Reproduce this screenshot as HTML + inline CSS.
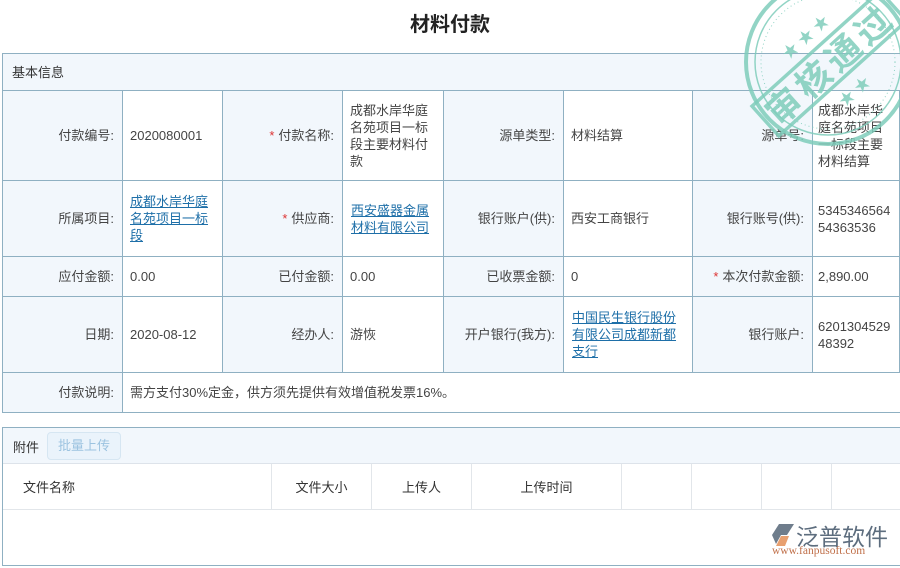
<!DOCTYPE html>
<html><head><meta charset="utf-8"><style>
*{margin:0;padding:0;box-sizing:border-box}
body{width:900px;height:568px;background:#fff;font-family:"Liberation Sans","Noto Sans CJK SC",sans-serif;font-size:13px;color:#444;position:relative;overflow:hidden}
.t{position:absolute;left:0;top:8px;width:900px;text-align:center;font-size:20px;font-weight:bold;color:#222}
.c{position:absolute;border-right:1px solid #8fb0c2;border-bottom:1px solid #8fb0c2;display:flex;align-items:center;line-height:17px}
.l{background:#f2f7fc;justify-content:flex-end;padding-right:8px;text-align:right}
.v{background:#fff;padding-left:7px;padding-right:4px}
.s{color:#d33;margin-right:4px}
a{color:#1e6fa8;text-decoration:underline}
.box{position:absolute;border:1px solid #8fb0c2}
.h{position:absolute;border-right:1px solid #e2e6ea;height:45px;top:464px;display:flex;align-items:center;justify-content:center;color:#333}
</style></head><body>
<div class="t">材料付款</div>
<div class="box" style="left:2px;top:53px;width:900px;height:360px;border-right:none"></div>
<div class="c" style="left:3px;top:54px;width:897px;height:37px;background:#f2f7fc;padding-left:9px;color:#333;border-right:none">基本信息</div>

<!-- row1 -->
<div class="c l" style="left:3px;top:91px;width:120px;height:90px">付款编号:</div>
<div class="c v" style="left:123px;top:91px;width:100px;height:90px">2020080001</div>
<div class="c l" style="left:223px;top:91px;width:120px;height:90px"><span class="s">*</span>付款名称:</div>
<div class="c v" style="left:343px;top:91px;width:101px;height:90px">成都水岸华庭名苑项目一标段主要材料付款</div>
<div class="c l" style="left:444px;top:91px;width:120px;height:90px">源单类型:</div>
<div class="c v" style="left:564px;top:91px;width:129px;height:90px">材料结算</div>
<div class="c l" style="left:693px;top:91px;width:120px;height:90px">源单号:</div>
<div class="c v" style="left:813px;top:91px;width:87px;height:90px;padding-left:5px">成都水岸华庭名苑项目一标段主要材料结算</div>
<!-- row2 -->
<div class="c l" style="left:3px;top:181px;width:120px;height:76px">所属项目:</div>
<div class="c v" style="left:123px;top:181px;width:100px;height:76px"><a>成都水岸华庭名苑项目一标段</a></div>
<div class="c l" style="left:223px;top:181px;width:120px;height:76px"><span class="s">*</span>供应商:</div>
<div class="c v" style="left:343px;top:181px;width:101px;height:76px;padding-left:8px"><a>西安盛器金属材料有限公司</a></div>
<div class="c l" style="left:444px;top:181px;width:120px;height:76px">银行账户(供):</div>
<div class="c v" style="left:564px;top:181px;width:129px;height:76px">西安工商银行</div>
<div class="c l" style="left:693px;top:181px;width:120px;height:76px">银行账号(供):</div>
<div class="c v" style="left:813px;top:181px;width:87px;height:76px;padding-left:5px;word-break:break-all">534534656454363536</div>
<!-- row3 -->
<div class="c l" style="left:3px;top:257px;width:120px;height:40px">应付金额:</div>
<div class="c v" style="left:123px;top:257px;width:100px;height:40px">0.00</div>
<div class="c l" style="left:223px;top:257px;width:120px;height:40px">已付金额:</div>
<div class="c v" style="left:343px;top:257px;width:101px;height:40px">0.00</div>
<div class="c l" style="left:444px;top:257px;width:120px;height:40px">已收票金额:</div>
<div class="c v" style="left:564px;top:257px;width:129px;height:40px">0</div>
<div class="c l" style="left:693px;top:257px;width:120px;height:40px"><span class="s">*</span>本次付款金额:</div>
<div class="c v" style="left:813px;top:257px;width:87px;height:40px;padding-left:5px">2,890.00</div>
<!-- row4 -->
<div class="c l" style="left:3px;top:297px;width:120px;height:76px">日期:</div>
<div class="c v" style="left:123px;top:297px;width:100px;height:76px">2020-08-12</div>
<div class="c l" style="left:223px;top:297px;width:120px;height:76px">经办人:</div>
<div class="c v" style="left:343px;top:297px;width:101px;height:76px">游恢</div>
<div class="c l" style="left:444px;top:297px;width:120px;height:76px">开户银行(我方):</div>
<div class="c v" style="left:564px;top:297px;width:129px;height:76px;padding-left:8px"><a>中国民生银行股份有限公司成都新都支行</a></div>
<div class="c l" style="left:693px;top:297px;width:120px;height:76px">银行账户:</div>
<div class="c v" style="left:813px;top:297px;width:87px;height:76px;padding-left:5px;word-break:break-all">620130452948392</div>
<!-- row5 -->
<div class="c l" style="left:3px;top:373px;width:120px;height:39px;border-bottom:none">付款说明:</div>
<div class="c v" style="left:123px;top:373px;width:777px;height:39px;border-right:none;border-bottom:none">需方支付30%定金，供方须先提供有效增值税发票16%。</div>

<!-- attachments -->
<div class="box" style="left:2px;top:427px;width:900px;height:139px;border-right:none"></div>
<div style="position:absolute;left:3px;top:428px;width:897px;height:36px;background:#f2f7fc;border-bottom:1px solid #dde3ea"></div>
<div style="position:absolute;left:13px;top:437px;color:#333">附件</div>
<div style="position:absolute;left:47px;top:432px;width:74px;height:28px;border:1px solid #d6e6f2;border-radius:4px;background:#eaf3fb;color:#9cc3e0;text-align:center;line-height:26px">批量上传</div>
<div style="position:absolute;left:3px;top:509px;width:897px;border-top:1px solid #e2e6ea"></div>
<div class="h" style="left:3px;width:269px;justify-content:flex-start;padding-left:20px">文件名称</div>
<div class="h" style="left:272px;width:100px">文件大小</div>
<div class="h" style="left:372px;width:100px">上传人</div>
<div class="h" style="left:472px;width:150px">上传时间</div>
<div class="h" style="left:622px;width:70px"></div>
<div class="h" style="left:692px;width:70px"></div>
<div class="h" style="left:762px;width:70px"></div>

<!-- logo -->
<svg style="position:absolute;left:770px;top:522px" width="26" height="26" viewBox="0 0 26 26"><polygon points="2,13 9,2 24,2 17,13 11,13 6,22" fill="#6f7d8c"/><polygon points="11,14 19,14 15,24 6,24" fill="#e8a070"/></svg>
<div style="position:absolute;left:796px;top:518px;font-size:23px;color:#5d6d7e">泛普软件</div>
<div style="position:absolute;left:772px;top:545px;font-family:'Liberation Serif',serif;font-size:11.5px;color:#c0704a">www.fanpusoft.com</div>

<!-- stamp -->
<svg style="position:absolute;left:738px;top:-28px" width="180" height="180" viewBox="0 0 180 180">
<g fill="none" stroke="#7fcdbb" opacity="0.85">
<circle cx="90" cy="90" r="82" stroke-width="4"/>
<circle cx="90" cy="90" r="73" stroke-width="1.5"/>
<circle cx="90" cy="90" r="67" stroke-width="1" stroke-dasharray="1 3"/>
</g>
<g transform="rotate(-42 90 90)" opacity="0.85">
<rect x="4" y="72" width="172" height="40" fill="none" stroke="#7fcdbb" stroke-width="3.5"/>
<text x="90" y="106" text-anchor="middle" font-family="'Noto Sans CJK SC',sans-serif" font-weight="bold" font-size="35" fill="#7fcdbb" letter-spacing="5">审核通过</text>
<text x="90" y="62" text-anchor="middle" font-size="16" fill="#7fcdbb">★ ★ ★</text>
<text x="90" y="135" text-anchor="middle" font-size="16" fill="#7fcdbb">★ ★</text>
</g>
</svg>
</body></html>
